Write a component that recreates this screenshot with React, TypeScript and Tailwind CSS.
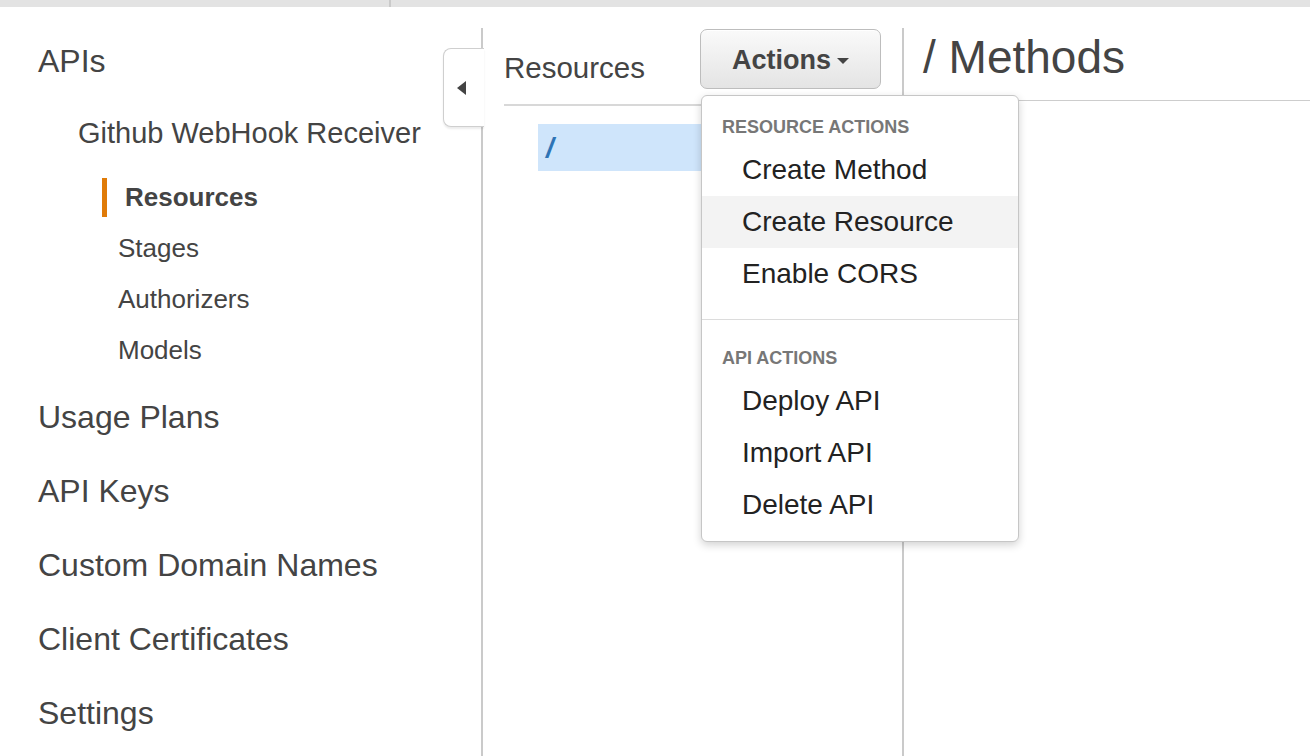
const font = { fontFamily: '"Liberation Sans", Arial, sans-serif' };

const subItems = ["Stages", "Authorizers", "Models"];
const topItems = ["Usage Plans", "API Keys", "Custom Domain Names", "Client Certificates", "Settings"];

function ActionsMenu() {
  const Header = ({ children }: { children: React.ReactNode }) => (
    <div className="flex h-[34px] items-center pl-[20px] text-[18px] font-bold uppercase text-[#777]">
      {children}
    </div>
  );
  const Item = ({ label, active }: { label: string; active?: boolean }) => (
    <div
      className={`flex h-[52px] items-center pl-[40px] text-[28px] text-[#222] ${
        active ? "bg-[#f3f3f3]" : ""
      }`}
    >
      {label}
    </div>
  );
  return (
    <div className="absolute left-[1px] top-[66px] z-20 w-[318px] rounded-[6px] border border-[#c6c6c6] bg-white pb-[10px] pt-[14px] shadow-[0_3px_8px_rgba(0,0,0,0.18)]">
      <Header>Resource Actions</Header>
      <Item label="Create Method" />
      <Item label="Create Resource" active />
      <Item label="Enable CORS" />
      <div className="mb-[21px] mt-[19px] h-px bg-[#dcdcdc]" />
      <Header>API Actions</Header>
      <Item label="Deploy API" />
      <Item label="Import API" />
      <Item label="Delete API" />
    </div>
  );
}

export default function App() {
  return (
    <div className="h-[756px] w-[1310px] overflow-hidden bg-white text-[#444]" style={font}>
      {/* top strip */}
      <div className="flex h-[7px] bg-[#e3e3e3]">
        <div className="w-[391px] border-r-2 border-[#cacaca]" />
      </div>

      <div className="mt-[21px] flex h-[728px]">
        {/* sidebar */}
        <aside className="relative w-[483px] shrink-0 border-r-2 border-[#cacaca] pl-[38px]">
          <div className="flex h-[66px] items-center text-[32px]">APIs</div>
          <div className="mt-[2px] flex h-[76px] items-center pl-[40px] text-[29px]">Github WebHook Receiver</div>
          <div className="flex h-[51px] items-center pl-[64px]">
            <span className="h-[39px] w-[5px] bg-[#e07b08]" />
            <span className="ml-[18px] text-[26px] font-bold">Resources</span>
          </div>
          {subItems.map((s) => (
            <div key={s} className="flex h-[51px] items-center pl-[80px] text-[26px]">
              {s}
            </div>
          ))}
          <div className="mt-[4px]">
            {topItems.map((s) => (
              <div key={s} className="flex h-[74px] items-center text-[32px]">
                {s}
              </div>
            ))}
          </div>

          {/* collapse tab */}
          <button className="absolute left-[443px] top-[20px] flex h-[79px] w-[41px] items-center justify-center rounded-l-[8px] border border-r-0 border-[#cfcfcf] bg-white shadow-[0_2px_2px_rgba(0,0,0,0.08)]">
            <span className="mr-[6px] h-0 w-0 border-y-[7px] border-r-[9px] border-y-transparent border-r-[#444]" />
          </button>
        </aside>

        {/* resources panel */}
        <section className="w-[421px] shrink-0 border-r-2 border-[#cacaca]">
          <div className="mx-[21px] flex h-[78px] items-start justify-between border-b-2 border-[#d8d8d8]">
            <div className="mt-[23px] text-[29.5px] leading-[normal]">Resources</div>
            <div className="relative mt-[1px]">
              <button className="flex h-[60px] w-[181px] items-center justify-center rounded-[7px] border border-[#bdbdbd] bg-gradient-to-b from-[#fafafa] to-[#e4e4e4] pt-[2px] text-[27px] font-bold text-[#444] shadow-[inset_0_1px_0_#fff]">
                Actions
                <span className="ml-[6px] mt-[2px] h-0 w-0 border-x-[6px] border-t-[6px] border-x-transparent border-t-[#444]" />
              </button>
              <ActionsMenu />
            </div>
          </div>
          <div className="ml-[55px] mr-[21px] mt-[18px] flex h-[47px] items-center bg-[#cfe5fb] pl-[8px] text-[28px] font-bold italic text-[#2e74b5]">
            /
          </div>
        </section>

        {/* methods panel */}
        <section className="flex-1">
          <div className="h-[73px] border-b border-[#cdcdcd] pl-[19px] pt-[2px] text-[46px] leading-[normal] text-[#444]">
            / Methods
          </div>
        </section>
      </div>
    </div>
  );
}
